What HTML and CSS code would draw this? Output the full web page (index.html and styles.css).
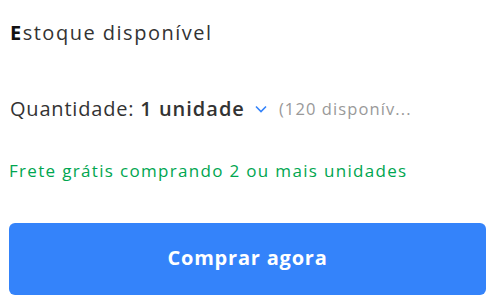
FILE: index.html
```html
<!DOCTYPE html>
<html lang="pt-BR">
<head>
<meta charset="utf-8">
<link rel="stylesheet" href="styles.css">
</head>
<body>
<div class="panel">
  <p class="stock"><strong>E</strong>stoque disponível</p>
  <div class="qty">
    <span class="qty-label">Quantidade:</span>
    <span class="qty-value">1 unidade</span>
    <svg class="chevron" width="12" height="8" viewBox="0 0 12 8"><path d="M1 1.5l5 5 5-5" fill="none" stroke="#3483fa" stroke-width="1.6"/></svg>
    <span class="qty-avail">(120 disponív...</span>
  </div>
  <p class="shipping">Frete grátis comprando 2 ou mais unidades</p>
  <button class="buy">Comprar agora</button>
</div>
</body>
</html>
```
FILE: styles.css
```css
* { box-sizing: border-box; }
body {
  margin: 0;
  background: #fff;
  font-family: "Open Sans", sans-serif;
  color: #333;
}
.panel {
  display: flex;
  flex-direction: column;
  padding: 21px 14px 0 9px;
}
.stock {
  margin: 0 0 0 1px;
  font-size: 20px;
  line-height: 24px;
  letter-spacing: 1.5px;
}
.stock strong { font-weight: 700; color: #111; }
.qty {
  display: flex;
  align-items: center;
  margin: 51px 0 0 1px;
  height: 24px;
  white-space: nowrap;
}
.qty-label { font-size: 20px; letter-spacing: 0.8px; }
.qty-value { font-size: 20px; font-weight: 600; margin-left: 6px; letter-spacing: 1px; }
.chevron { margin: 1px 0 0 10px; }
.qty-avail { font-size: 16.5px; color: #999; margin-left: 12px; letter-spacing: 1.1px; }
.shipping {
  margin: 40px 0 0;
  font-size: 17px;
  line-height: 22px;
  letter-spacing: 1.32px;
  color: #00a650;
}
.buy {
  margin-top: 41px;
  height: 72px;
  padding: 0 0 3px;
  border: 0;
  border-radius: 6px;
  background: #3483fa;
  color: #fff;
  font-family: inherit;
  font-size: 20px;
  font-weight: 700;
  letter-spacing: 0.8px;
}
```
